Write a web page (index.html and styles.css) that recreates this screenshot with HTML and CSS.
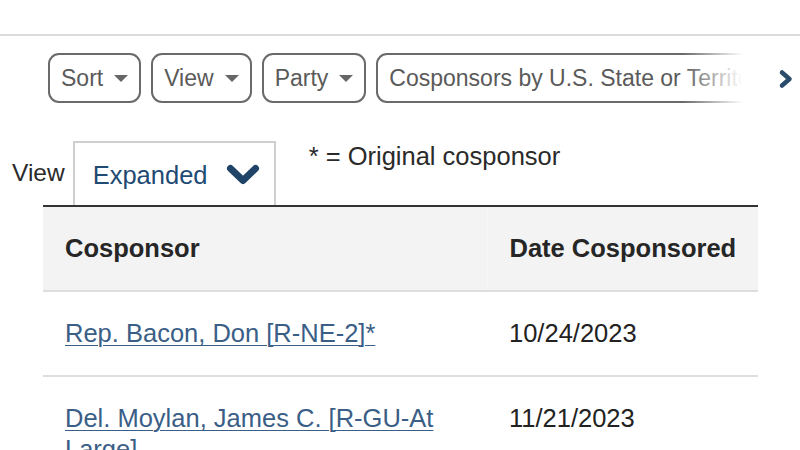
FILE: index.html
```html
<!DOCTYPE html>
<html lang="en">
<head>
<meta charset="utf-8">
<title>Cosponsors</title>
<link rel="stylesheet" href="styles.css">
</head>
<body>
<div class="topbar"></div>
<div class="filter-bar">
  <div class="filter-scroll">
    <button class="pill">Sort <svg class="caret" width="14" height="7" viewBox="0 0 14 7"><polygon points="0,0 14,0 7,7"/></svg></button>
    <button class="pill">View <svg class="caret" width="14" height="7" viewBox="0 0 14 7"><polygon points="0,0 14,0 7,7"/></svg></button>
    <button class="pill">Party <svg class="caret" width="14" height="7" viewBox="0 0 14 7"><polygon points="0,0 14,0 7,7"/></svg></button>
    <button class="pill">Cosponsors by U.S. State or Territory <svg class="caret" width="14" height="7" viewBox="0 0 14 7"><polygon points="0,0 14,0 7,7"/></svg></button>
  </div>
  <div class="scroll-next">
    <svg width="16" height="20" viewBox="0 0 16 20"><polyline points="4,3.5 11.5,10 4,16.5" fill="none" stroke="#2b4b6a" stroke-width="4.5" stroke-linecap="round" stroke-linejoin="round"/></svg>
  </div>
</div>
<div class="view-row">
  <span class="view-label">View</span>
  <div class="select">
    <span class="select-text">Expanded</span>
    <svg class="select-chev" width="34" height="22" viewBox="0 0 34 22"><polyline points="4.5,4.5 17,16.5 29.5,4.5" fill="none" stroke="#1f4467" stroke-width="7" stroke-linecap="round" stroke-linejoin="round"/></svg>
  </div>
  <span class="note">* = Original cosponsor</span>
</div>
<table class="cosponsors">
  <thead>
    <tr><th class="col-name">Cosponsor</th><th class="col-date">Date Cosponsored</th></tr>
  </thead>
  <tbody>
    <tr><td class="col-name"><a href="#">Rep. Bacon, Don [R-NE-2]*</a></td><td class="col-date">10/24/2023</td></tr>
    <tr><td class="col-name"><a href="#">Del. Moylan, James C. [R-GU-At Large]</a></td><td class="col-date">11/21/2023</td></tr>
  </tbody>
</table>
</body>
</html>
```
FILE: styles.css
```css
html, body {
  margin: 0;
  padding: 0;
  background: #ffffff;
  font-family: "Liberation Sans", Arial, sans-serif;
  color: #222222;
  overflow: hidden;
}

.topbar {
  height: 34px;
  border-bottom: 2px solid #dcdcdc;
}

.filter-bar {
  display: flex;
  align-items: center;
  padding-top: 17px;
  padding-left: 48px;
}

.filter-scroll {
  position: relative;
  display: flex;
  gap: 10px;
  width: 705px;
  overflow: hidden;
  flex-shrink: 0;
}

.filter-scroll::after {
  content: "";
  position: absolute;
  top: 0;
  right: 0;
  width: 70px;
  height: 100%;
  background: linear-gradient(to right, rgba(255,255,255,0), #ffffff 85%);
}

.pill {
  flex-shrink: 0;
  display: flex;
  align-items: center;
  gap: 11px;
  height: 50px;
  padding: 0 11px 0 11px;
  border: 2px solid #6a6a6a;
  border-radius: 11px;
  background: #ffffff;
  font-family: "Liberation Sans", Arial, sans-serif;
  font-size: 23px;
  color: #5a5a5a;
  white-space: nowrap;
}

.caret {
  fill: #666666;
  margin-top: 1px;
}

.scroll-next {
  display: flex;
  align-items: center;
  margin-left: 25px;
  margin-top: 1px;
}

.view-row {
  display: flex;
  align-items: flex-start;
  margin-top: 38px;
  padding-left: 12px;
  height: 64px;
}

.view-label {
  font-size: 24.5px;
  line-height: 30px;
  margin-top: 17px;
  color: #2a2a2a;
}

.select {
  display: flex;
  align-items: center;
  justify-content: space-between;
  box-sizing: border-box;
  width: 203px;
  height: 64px;
  margin-left: 8px;
  padding: 2px 14px 0 18px;
  border: 2px solid #cfcfcf;
  border-bottom: none;
  background: #ffffff;
}

.select-text {
  font-size: 25.5px;
  color: #1f4a74;
}

.note {
  margin-left: 33px;
  font-size: 25.5px;
  line-height: 30px;
  color: #2a2a2a;
}

.cosponsors {
  margin-left: 43px;
  width: 715px;
  table-layout: fixed;
  border-collapse: collapse;
  border-top: 2px solid #333333;
  font-size: 25.5px;
  line-height: 31px;
}

.cosponsors th,
.cosponsors td {
  box-sizing: border-box;
  text-align: left;
  vertical-align: top;
  padding: 26px 22px;
  border-bottom: 2px solid #dedede;
}

.cosponsors th {
  background: #f3f3f3;
  font-weight: bold;
  color: #262626;
}

.cosponsors th.col-date {
  border-left: 1px solid #f7f7f7;
}

.col-name {
  width: 444px;
}

.col-date {
  white-space: nowrap;
}

.cosponsors td {
  color: #222222;
}

.cosponsors a {
  color: #3a5e86;
  text-decoration: underline;
  text-decoration-thickness: 1px;
  text-underline-offset: 3px;
}
```
